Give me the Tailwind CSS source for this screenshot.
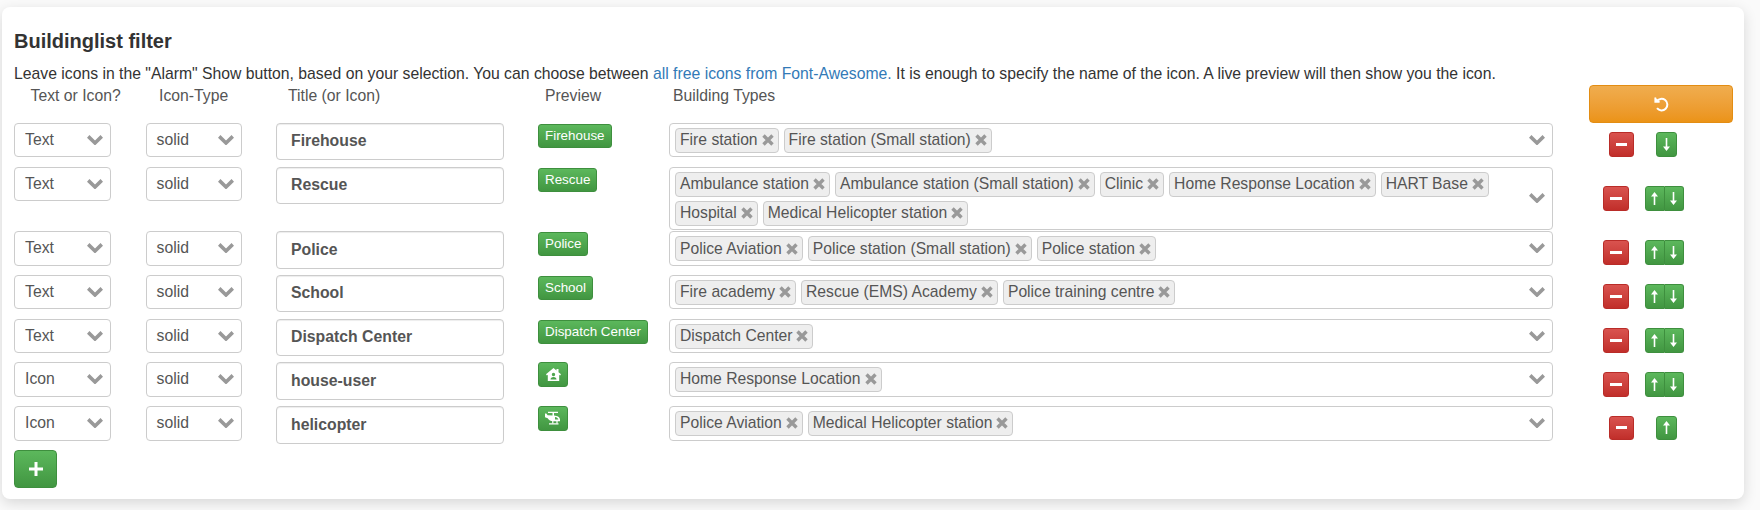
<!doctype html>
<html>
<head>
<meta charset="utf-8">
<script src="https://cdn.jsdelivr.net/npm/@tailwindcss/browser@4"></script>
</head>
<body class="bg-[#fafafa] font-['Liberation_Sans',Arial,sans-serif] text-[15.75px] text-[#333]">
<div class="w-[1760px] h-[510px] overflow-hidden pt-[7px] pl-[2px]">
  <div class="w-[1742px] h-[491.5px] bg-white rounded-[8px] shadow-[0_4px_14px_rgba(0,0,0,0.14)] pl-[12px]">
    <h3 class="pt-[22px] text-[20px] leading-[24px] font-bold text-[#333]">Buildinglist filter</h3>
    <p class="mt-[10.5px] h-[20px] leading-[20px] whitespace-nowrap">Leave icons in the "Alarm" Show button, based on your selection. You can choose between <a class="text-[#337ab7]">all free icons from Font-Awesome.</a> It is enough to specify the name of the icon. A live preview will then show you the icon.</p>

    <!-- header -->
    <div class="grid grid-cols-[131.5px_130.5px_262px_131px_884px_180px] h-[39px] text-[#555]">
      <div class="pl-[16.5px] leading-[23px]">Text or Icon?</div>
      <div class="pl-[13.5px] leading-[23px]">Icon-Type</div>
      <div class="pl-[12px] leading-[23px]">Title (or Icon)</div>
      <div class="pl-[7px] leading-[23px]">Preview</div>
      <div class="pl-[4px] leading-[23px]">Building Types</div>
      <div class="flex justify-end pt-[1.5px]">
        <button class="w-[144px] h-[38px] rounded-[4px] border border-[#e38d13] bg-linear-to-b from-[#f0ad4e] to-[#eb9316] flex items-center justify-center">
          <svg width="16" height="16" viewBox="0 0 16 16" fill="none" stroke="#fff" stroke-width="2"><path d="M2.300 1.500v4.300h4.300" stroke-width="1.800" fill="#fff" stroke-linejoin="miter"/><path d="M3.600 5.600A5.800 5.800 0 1 1 4 12.200"/></svg>
        </button>
      </div>
    </div>

    <!-- row 1 -->
    <div class="grid grid-cols-[131.5px_130.5px_262px_131px_884px_180px] h-[44px]">
      <div class="w-[96.5px] h-[34.5px] border border-[#ccc] rounded-[4px] flex items-center justify-between pl-[10px] pr-[7px] text-[#555]"><span>Text</span><svg width="16" height="10" viewBox="0 0 16 10" fill="none" stroke="#999" stroke-width="3.6"><path d="M1.2 1.4 8 8l6.8-6.6"/></svg></div>
      <div class="w-[96px] h-[34.5px] border border-[#ccc] rounded-[4px] flex items-center justify-between pl-[10px] pr-[7px] text-[#555]"><span>solid</span><svg width="16" height="10" viewBox="0 0 16 10" fill="none" stroke="#999" stroke-width="3.6"><path d="M1.2 1.4 8 8l6.8-6.6"/></svg></div>
      <div class="w-[228px] h-[37.5px] border border-[#ccc] rounded-[4px] shadow-[inset_0_1px_1px_rgba(0,0,0,0.075)] flex items-center pl-[14px] text-[15.8px] font-bold text-[#555]">Firehouse</div>
      <div><span class="inline-flex items-center h-[24px] px-[6px] rounded-[3px] border border-[#3e8f3e] bg-linear-to-b from-[#5cb85c] to-[#419641] text-white text-[13.4px]">Firehouse</span></div>
      <div class="w-[884px] h-[34.5px] border border-[#ccc] rounded-[4px] flex items-start justify-between pr-[7px]">
        <div class="flex flex-wrap gap-x-[5px] gap-y-[4px] pl-[5px] pt-[4px]">
          <span class="inline-flex items-center h-[25px] px-[4px] gap-[4px] bg-[#eee] border border-[#ccc] rounded-[4px] text-[15.7px] text-[#555]">Fire station<svg width="12" height="12" viewBox="0 0 12 12" stroke="#999" stroke-width="3.4"><path d="M1.5 1.5l9 9M10.5 1.5l-9 9"/></svg></span>
          <span class="inline-flex items-center h-[25px] px-[4px] gap-[4px] bg-[#eee] border border-[#ccc] rounded-[4px] text-[15.7px] text-[#555]">Fire station (Small station)<svg width="12" height="12" viewBox="0 0 12 12" stroke="#999" stroke-width="3.4"><path d="M1.5 1.5l9 9M10.5 1.5l-9 9"/></svg></span>
        </div>
        <svg class="mt-[11px] shrink-0" width="16" height="10" viewBox="0 0 16 10" fill="none" stroke="#999" stroke-width="3.6"><path d="M1.2 1.4 8 8l6.8-6.6"/></svg>
      </div>
      <div class="flex justify-center gap-[22px] pt-[9px]">
        <button class="w-[25px] h-[25px] rounded-[3px] border border-[#b92c28] bg-linear-to-b from-[#d9534f] to-[#c12e2a] flex items-center justify-center"><span class="block w-[11px] h-[3px] bg-white"></span></button>
        <button class="w-[21px] h-[25px] rounded-[3px] border border-[#3e8f3e] bg-linear-to-b from-[#5cb85c] to-[#419641] flex items-center justify-center"><svg width="7" height="13" viewBox="0 0 7 13" fill="#fff"><path d="M2.700 0h1.600v8.500H7L3.500 13 0 8.500h2.700z"/></svg></button>
      </div>
    </div>

    <!-- row 2 -->
    <div class="grid grid-cols-[131.5px_130.5px_262px_131px_884px_180px] h-[64.5px]">
      <div class="w-[96.5px] h-[34.5px] border border-[#ccc] rounded-[4px] flex items-center justify-between pl-[10px] pr-[7px] text-[#555]"><span>Text</span><svg width="16" height="10" viewBox="0 0 16 10" fill="none" stroke="#999" stroke-width="3.6"><path d="M1.2 1.4 8 8l6.8-6.6"/></svg></div>
      <div class="w-[96px] h-[34.5px] border border-[#ccc] rounded-[4px] flex items-center justify-between pl-[10px] pr-[7px] text-[#555]"><span>solid</span><svg width="16" height="10" viewBox="0 0 16 10" fill="none" stroke="#999" stroke-width="3.6"><path d="M1.2 1.4 8 8l6.8-6.6"/></svg></div>
      <div class="w-[228px] h-[37.5px] border border-[#ccc] rounded-[4px] shadow-[inset_0_1px_1px_rgba(0,0,0,0.075)] flex items-center pl-[14px] text-[15.8px] font-bold text-[#555]">Rescue</div>
      <div><span class="inline-flex items-center h-[24px] px-[6px] rounded-[3px] border border-[#3e8f3e] bg-linear-to-b from-[#5cb85c] to-[#419641] text-white text-[13.4px]">Rescue</span></div>
      <div class="w-[884px] h-[63.5px] border border-[#ccc] rounded-[4px] flex items-center justify-between pr-[7px]">
        <div class="flex flex-wrap gap-x-[5px] gap-y-[4px] pl-[5px] self-start pt-[4px] w-[840px]">
          <span class="inline-flex items-center h-[25px] px-[4px] gap-[4px] bg-[#eee] border border-[#ccc] rounded-[4px] text-[15.7px] text-[#555]">Ambulance station<svg width="12" height="12" viewBox="0 0 12 12" stroke="#999" stroke-width="3.4"><path d="M1.5 1.5l9 9M10.5 1.5l-9 9"/></svg></span>
          <span class="inline-flex items-center h-[25px] px-[4px] gap-[4px] bg-[#eee] border border-[#ccc] rounded-[4px] text-[15.7px] text-[#555]">Ambulance station (Small station)<svg width="12" height="12" viewBox="0 0 12 12" stroke="#999" stroke-width="3.4"><path d="M1.5 1.5l9 9M10.5 1.5l-9 9"/></svg></span>
          <span class="inline-flex items-center h-[25px] px-[4px] gap-[4px] bg-[#eee] border border-[#ccc] rounded-[4px] text-[15.7px] text-[#555]">Clinic<svg width="12" height="12" viewBox="0 0 12 12" stroke="#999" stroke-width="3.4"><path d="M1.5 1.5l9 9M10.5 1.5l-9 9"/></svg></span>
          <span class="inline-flex items-center h-[25px] px-[4px] gap-[4px] bg-[#eee] border border-[#ccc] rounded-[4px] text-[15.7px] text-[#555]">Home Response Location<svg width="12" height="12" viewBox="0 0 12 12" stroke="#999" stroke-width="3.4"><path d="M1.5 1.5l9 9M10.5 1.5l-9 9"/></svg></span>
          <span class="inline-flex items-center h-[25px] px-[4px] gap-[4px] bg-[#eee] border border-[#ccc] rounded-[4px] text-[15.7px] text-[#555]">HART Base<svg width="12" height="12" viewBox="0 0 12 12" stroke="#999" stroke-width="3.4"><path d="M1.5 1.5l9 9M10.5 1.5l-9 9"/></svg></span>
          <span class="inline-flex items-center h-[25px] px-[4px] gap-[4px] bg-[#eee] border border-[#ccc] rounded-[4px] text-[15.7px] text-[#555]">Hospital<svg width="12" height="12" viewBox="0 0 12 12" stroke="#999" stroke-width="3.4"><path d="M1.5 1.5l9 9M10.5 1.5l-9 9"/></svg></span>
          <span class="inline-flex items-center h-[25px] px-[4px] gap-[4px] bg-[#eee] border border-[#ccc] rounded-[4px] text-[15.7px] text-[#555]">Medical Helicopter station<svg width="12" height="12" viewBox="0 0 12 12" stroke="#999" stroke-width="3.4"><path d="M1.5 1.5l9 9M10.5 1.5l-9 9"/></svg></span>
        </div>
        <svg class="shrink-0" width="16" height="10" viewBox="0 0 16 10" fill="none" stroke="#999" stroke-width="3.6"><path d="M1.2 1.4 8 8l6.8-6.6"/></svg>
      </div>
      <div class="flex justify-center gap-[16px] pt-[19px]">
        <button class="w-[26px] h-[25px] rounded-[3px] border border-[#b92c28] bg-linear-to-b from-[#d9534f] to-[#c12e2a] flex items-center justify-center"><span class="block w-[12px] h-[3px] bg-white"></span></button>
        <div class="flex h-[25px]">
          <button class="w-[20px] h-[25px] rounded-l-[3px] border border-[#3e8f3e] bg-linear-to-b from-[#5cb85c] to-[#419641] flex items-center justify-center"><svg width="7" height="13" viewBox="0 0 7 13" fill="#fff"><path d="M2.700 13h1.600V4.500H7L3.500 0 0 4.500h2.700z"/></svg></button>
          <button class="w-[19px] h-[25px] rounded-r-[3px] border border-l-0 border-[#3e8f3e] bg-linear-to-b from-[#5cb85c] to-[#419641] flex items-center justify-center"><svg width="7" height="13" viewBox="0 0 7 13" fill="#fff"><path d="M2.700 0h1.600v8.500H7L3.500 13 0 8.500h2.700z"/></svg></button>
        </div>
      </div>
    </div>

    <!-- row 3 -->
    <div class="grid grid-cols-[131.5px_130.5px_262px_131px_884px_180px] h-[43.5px]">
      <div class="w-[96.5px] h-[34.5px] border border-[#ccc] rounded-[4px] flex items-center justify-between pl-[10px] pr-[7px] text-[#555]"><span>Text</span><svg width="16" height="10" viewBox="0 0 16 10" fill="none" stroke="#999" stroke-width="3.6"><path d="M1.2 1.4 8 8l6.8-6.6"/></svg></div>
      <div class="w-[96px] h-[34.5px] border border-[#ccc] rounded-[4px] flex items-center justify-between pl-[10px] pr-[7px] text-[#555]"><span>solid</span><svg width="16" height="10" viewBox="0 0 16 10" fill="none" stroke="#999" stroke-width="3.6"><path d="M1.2 1.4 8 8l6.8-6.6"/></svg></div>
      <div class="w-[228px] h-[37.5px] border border-[#ccc] rounded-[4px] shadow-[inset_0_1px_1px_rgba(0,0,0,0.075)] flex items-center pl-[14px] text-[15.8px] font-bold text-[#555]">Police</div>
      <div><span class="inline-flex items-center h-[24px] px-[6px] rounded-[3px] border border-[#3e8f3e] bg-linear-to-b from-[#5cb85c] to-[#419641] text-white text-[13.4px]">Police</span></div>
      <div class="w-[884px] h-[34.5px] border border-[#ccc] rounded-[4px] flex items-start justify-between pr-[7px]">
        <div class="flex flex-wrap gap-x-[5px] gap-y-[4px] pl-[5px] pt-[4px]">
          <span class="inline-flex items-center h-[25px] px-[4px] gap-[4px] bg-[#eee] border border-[#ccc] rounded-[4px] text-[15.7px] text-[#555]">Police Aviation<svg width="12" height="12" viewBox="0 0 12 12" stroke="#999" stroke-width="3.4"><path d="M1.5 1.5l9 9M10.5 1.5l-9 9"/></svg></span>
          <span class="inline-flex items-center h-[25px] px-[4px] gap-[4px] bg-[#eee] border border-[#ccc] rounded-[4px] text-[15.7px] text-[#555]">Police station (Small station)<svg width="12" height="12" viewBox="0 0 12 12" stroke="#999" stroke-width="3.4"><path d="M1.5 1.5l9 9M10.5 1.5l-9 9"/></svg></span>
          <span class="inline-flex items-center h-[25px] px-[4px] gap-[4px] bg-[#eee] border border-[#ccc] rounded-[4px] text-[15.7px] text-[#555]">Police station<svg width="12" height="12" viewBox="0 0 12 12" stroke="#999" stroke-width="3.4"><path d="M1.5 1.5l9 9M10.5 1.5l-9 9"/></svg></span>
        </div>
        <svg class="mt-[11px] shrink-0" width="16" height="10" viewBox="0 0 16 10" fill="none" stroke="#999" stroke-width="3.6"><path d="M1.2 1.4 8 8l6.8-6.6"/></svg>
      </div>
      <div class="flex justify-center gap-[16px] pt-[9px]">
        <button class="w-[26px] h-[25px] rounded-[3px] border border-[#b92c28] bg-linear-to-b from-[#d9534f] to-[#c12e2a] flex items-center justify-center"><span class="block w-[12px] h-[3px] bg-white"></span></button>
        <div class="flex h-[25px]">
          <button class="w-[20px] h-[25px] rounded-l-[3px] border border-[#3e8f3e] bg-linear-to-b from-[#5cb85c] to-[#419641] flex items-center justify-center"><svg width="7" height="13" viewBox="0 0 7 13" fill="#fff"><path d="M2.700 13h1.600V4.500H7L3.500 0 0 4.500h2.700z"/></svg></button>
          <button class="w-[19px] h-[25px] rounded-r-[3px] border border-l-0 border-[#3e8f3e] bg-linear-to-b from-[#5cb85c] to-[#419641] flex items-center justify-center"><svg width="7" height="13" viewBox="0 0 7 13" fill="#fff"><path d="M2.700 0h1.600v8.500H7L3.500 13 0 8.500h2.700z"/></svg></button>
        </div>
      </div>
    </div>

    <!-- row 4 -->
    <div class="grid grid-cols-[131.5px_130.5px_262px_131px_884px_180px] h-[44px]">
      <div class="w-[96.5px] h-[34.5px] border border-[#ccc] rounded-[4px] flex items-center justify-between pl-[10px] pr-[7px] text-[#555]"><span>Text</span><svg width="16" height="10" viewBox="0 0 16 10" fill="none" stroke="#999" stroke-width="3.6"><path d="M1.2 1.4 8 8l6.8-6.6"/></svg></div>
      <div class="w-[96px] h-[34.5px] border border-[#ccc] rounded-[4px] flex items-center justify-between pl-[10px] pr-[7px] text-[#555]"><span>solid</span><svg width="16" height="10" viewBox="0 0 16 10" fill="none" stroke="#999" stroke-width="3.6"><path d="M1.2 1.4 8 8l6.8-6.6"/></svg></div>
      <div class="w-[228px] h-[37.5px] border border-[#ccc] rounded-[4px] shadow-[inset_0_1px_1px_rgba(0,0,0,0.075)] flex items-center pl-[14px] text-[15.8px] font-bold text-[#555]">School</div>
      <div><span class="inline-flex items-center h-[24px] px-[6px] rounded-[3px] border border-[#3e8f3e] bg-linear-to-b from-[#5cb85c] to-[#419641] text-white text-[13.4px]">School</span></div>
      <div class="w-[884px] h-[34.5px] border border-[#ccc] rounded-[4px] flex items-start justify-between pr-[7px]">
        <div class="flex flex-wrap gap-x-[5px] gap-y-[4px] pl-[5px] pt-[4px]">
          <span class="inline-flex items-center h-[25px] px-[4px] gap-[4px] bg-[#eee] border border-[#ccc] rounded-[4px] text-[15.7px] text-[#555]">Fire academy<svg width="12" height="12" viewBox="0 0 12 12" stroke="#999" stroke-width="3.4"><path d="M1.5 1.5l9 9M10.5 1.5l-9 9"/></svg></span>
          <span class="inline-flex items-center h-[25px] px-[4px] gap-[4px] bg-[#eee] border border-[#ccc] rounded-[4px] text-[15.7px] text-[#555]">Rescue (EMS) Academy<svg width="12" height="12" viewBox="0 0 12 12" stroke="#999" stroke-width="3.4"><path d="M1.5 1.5l9 9M10.5 1.5l-9 9"/></svg></span>
          <span class="inline-flex items-center h-[25px] px-[4px] gap-[4px] bg-[#eee] border border-[#ccc] rounded-[4px] text-[15.7px] text-[#555]">Police training centre<svg width="12" height="12" viewBox="0 0 12 12" stroke="#999" stroke-width="3.4"><path d="M1.5 1.5l9 9M10.5 1.5l-9 9"/></svg></span>
        </div>
        <svg class="mt-[11px] shrink-0" width="16" height="10" viewBox="0 0 16 10" fill="none" stroke="#999" stroke-width="3.6"><path d="M1.2 1.4 8 8l6.8-6.6"/></svg>
      </div>
      <div class="flex justify-center gap-[16px] pt-[9px]">
        <button class="w-[26px] h-[25px] rounded-[3px] border border-[#b92c28] bg-linear-to-b from-[#d9534f] to-[#c12e2a] flex items-center justify-center"><span class="block w-[12px] h-[3px] bg-white"></span></button>
        <div class="flex h-[25px]">
          <button class="w-[20px] h-[25px] rounded-l-[3px] border border-[#3e8f3e] bg-linear-to-b from-[#5cb85c] to-[#419641] flex items-center justify-center"><svg width="7" height="13" viewBox="0 0 7 13" fill="#fff"><path d="M2.700 13h1.600V4.500H7L3.500 0 0 4.500h2.700z"/></svg></button>
          <button class="w-[19px] h-[25px] rounded-r-[3px] border border-l-0 border-[#3e8f3e] bg-linear-to-b from-[#5cb85c] to-[#419641] flex items-center justify-center"><svg width="7" height="13" viewBox="0 0 7 13" fill="#fff"><path d="M2.700 0h1.600v8.500H7L3.500 13 0 8.500h2.700z"/></svg></button>
        </div>
      </div>
    </div>

    <!-- row 5 -->
    <div class="grid grid-cols-[131.5px_130.5px_262px_131px_884px_180px] h-[43px]">
      <div class="w-[96.5px] h-[34.5px] border border-[#ccc] rounded-[4px] flex items-center justify-between pl-[10px] pr-[7px] text-[#555]"><span>Text</span><svg width="16" height="10" viewBox="0 0 16 10" fill="none" stroke="#999" stroke-width="3.6"><path d="M1.2 1.4 8 8l6.8-6.6"/></svg></div>
      <div class="w-[96px] h-[34.5px] border border-[#ccc] rounded-[4px] flex items-center justify-between pl-[10px] pr-[7px] text-[#555]"><span>solid</span><svg width="16" height="10" viewBox="0 0 16 10" fill="none" stroke="#999" stroke-width="3.6"><path d="M1.2 1.4 8 8l6.8-6.6"/></svg></div>
      <div class="w-[228px] h-[37.5px] border border-[#ccc] rounded-[4px] shadow-[inset_0_1px_1px_rgba(0,0,0,0.075)] flex items-center pl-[14px] text-[15.8px] font-bold text-[#555]">Dispatch Center</div>
      <div><span class="inline-flex items-center h-[24px] px-[6px] rounded-[3px] border border-[#3e8f3e] bg-linear-to-b from-[#5cb85c] to-[#419641] text-white text-[13.4px] whitespace-nowrap">Dispatch Center</span></div>
      <div class="w-[884px] h-[34.5px] border border-[#ccc] rounded-[4px] flex items-start justify-between pr-[7px]">
        <div class="flex flex-wrap gap-x-[5px] gap-y-[4px] pl-[5px] pt-[4px]">
          <span class="inline-flex items-center h-[25px] px-[4px] gap-[4px] bg-[#eee] border border-[#ccc] rounded-[4px] text-[15.7px] text-[#555]">Dispatch Center<svg width="12" height="12" viewBox="0 0 12 12" stroke="#999" stroke-width="3.4"><path d="M1.5 1.5l9 9M10.5 1.5l-9 9"/></svg></span>
        </div>
        <svg class="mt-[11px] shrink-0" width="16" height="10" viewBox="0 0 16 10" fill="none" stroke="#999" stroke-width="3.6"><path d="M1.2 1.4 8 8l6.8-6.6"/></svg>
      </div>
      <div class="flex justify-center gap-[16px] pt-[9px]">
        <button class="w-[26px] h-[25px] rounded-[3px] border border-[#b92c28] bg-linear-to-b from-[#d9534f] to-[#c12e2a] flex items-center justify-center"><span class="block w-[12px] h-[3px] bg-white"></span></button>
        <div class="flex h-[25px]">
          <button class="w-[20px] h-[25px] rounded-l-[3px] border border-[#3e8f3e] bg-linear-to-b from-[#5cb85c] to-[#419641] flex items-center justify-center"><svg width="7" height="13" viewBox="0 0 7 13" fill="#fff"><path d="M2.700 13h1.600V4.500H7L3.500 0 0 4.500h2.700z"/></svg></button>
          <button class="w-[19px] h-[25px] rounded-r-[3px] border border-l-0 border-[#3e8f3e] bg-linear-to-b from-[#5cb85c] to-[#419641] flex items-center justify-center"><svg width="7" height="13" viewBox="0 0 7 13" fill="#fff"><path d="M2.700 0h1.600v8.500H7L3.500 13 0 8.500h2.700z"/></svg></button>
        </div>
      </div>
    </div>

    <!-- row 6 -->
    <div class="grid grid-cols-[131.5px_130.5px_262px_131px_884px_180px] h-[44px]">
      <div class="w-[96.5px] h-[35.5px] border border-[#ccc] rounded-[4px] flex items-center justify-between pl-[10px] pr-[7px] text-[#555]"><span>Icon</span><svg width="16" height="10" viewBox="0 0 16 10" fill="none" stroke="#999" stroke-width="3.6"><path d="M1.2 1.4 8 8l6.8-6.6"/></svg></div>
      <div class="w-[96px] h-[35.5px] border border-[#ccc] rounded-[4px] flex items-center justify-between pl-[10px] pr-[7px] text-[#555]"><span>solid</span><svg width="16" height="10" viewBox="0 0 16 10" fill="none" stroke="#999" stroke-width="3.6"><path d="M1.2 1.4 8 8l6.8-6.6"/></svg></div>
      <div class="w-[228px] h-[38.5px] border border-[#ccc] rounded-[4px] shadow-[inset_0_1px_1px_rgba(0,0,0,0.075)] flex items-center pl-[14px] text-[15.8px] font-bold text-[#555]">house-user</div>
      <div><span class="inline-flex items-center justify-center w-[30px] h-[25px] rounded-[3px] border border-[#3e8f3e] bg-linear-to-b from-[#5cb85c] to-[#419641]"><svg width="15" height="13" viewBox="0 0 15 13"><path fill="#fff" fill-rule="evenodd" d="M7.500 0 10.500 2.500V1h2v3.200L15 6.300l-.9 1.100-.9-.7V13H1.800V6.700l-.9.700L0 6.300zM7.500 4.800a1.700 1.700 0 1 0 0 3.400 1.700 1.700 0 0 0 0-3.400zM4.500 11.600h6c0-1.500-1.200-2.600-3-2.600s-3 1.100-3 2.600z"/></svg></span></div>
      <div class="w-[884px] h-[35.5px] border border-[#ccc] rounded-[4px] flex items-center justify-between pr-[7px]">
        <div class="flex flex-wrap gap-x-[5px] gap-y-[4px] pl-[5px]">
          <span class="inline-flex items-center h-[25px] px-[4px] gap-[4px] bg-[#eee] border border-[#ccc] rounded-[4px] text-[15.7px] text-[#555]">Home Response Location<svg width="12" height="12" viewBox="0 0 12 12" stroke="#999" stroke-width="3.4"><path d="M1.5 1.5l9 9M10.5 1.5l-9 9"/></svg></span>
        </div>
        <svg class="shrink-0" width="16" height="10" viewBox="0 0 16 10" fill="none" stroke="#999" stroke-width="3.6"><path d="M1.2 1.4 8 8l6.8-6.6"/></svg>
      </div>
      <div class="flex justify-center gap-[16px] pt-[10px]">
        <button class="w-[26px] h-[25px] rounded-[3px] border border-[#b92c28] bg-linear-to-b from-[#d9534f] to-[#c12e2a] flex items-center justify-center"><span class="block w-[12px] h-[3px] bg-white"></span></button>
        <div class="flex h-[25px]">
          <button class="w-[20px] h-[25px] rounded-l-[3px] border border-[#3e8f3e] bg-linear-to-b from-[#5cb85c] to-[#419641] flex items-center justify-center"><svg width="7" height="13" viewBox="0 0 7 13" fill="#fff"><path d="M2.700 13h1.600V4.500H7L3.500 0 0 4.500h2.700z"/></svg></button>
          <button class="w-[19px] h-[25px] rounded-r-[3px] border border-l-0 border-[#3e8f3e] bg-linear-to-b from-[#5cb85c] to-[#419641] flex items-center justify-center"><svg width="7" height="13" viewBox="0 0 7 13" fill="#fff"><path d="M2.700 0h1.600v8.500H7L3.500 13 0 8.500h2.700z"/></svg></button>
        </div>
      </div>
    </div>

    <!-- row 7 -->
    <div class="grid grid-cols-[131.5px_130.5px_262px_131px_884px_180px] h-[44px]">
      <div class="w-[96.5px] h-[35.5px] border border-[#ccc] rounded-[4px] flex items-center justify-between pl-[10px] pr-[7px] text-[#555]"><span>Icon</span><svg width="16" height="10" viewBox="0 0 16 10" fill="none" stroke="#999" stroke-width="3.6"><path d="M1.2 1.4 8 8l6.8-6.6"/></svg></div>
      <div class="w-[96px] h-[35.5px] border border-[#ccc] rounded-[4px] flex items-center justify-between pl-[10px] pr-[7px] text-[#555]"><span>solid</span><svg width="16" height="10" viewBox="0 0 16 10" fill="none" stroke="#999" stroke-width="3.6"><path d="M1.2 1.4 8 8l6.8-6.6"/></svg></div>
      <div class="w-[228px] h-[38.5px] border border-[#ccc] rounded-[4px] shadow-[inset_0_1px_1px_rgba(0,0,0,0.075)] flex items-center pl-[14px] text-[15.8px] font-bold text-[#555]">helicopter</div>
      <div><span class="inline-flex items-center justify-center w-[30px] h-[25px] rounded-[3px] border border-[#3e8f3e] bg-linear-to-b from-[#5cb85c] to-[#419641]"><svg width="17" height="14" viewBox="0 0 17 14"><path fill="#fff" fill-rule="evenodd" d="M0 2.500h1.300L2.600 4.200 7.500 4.500V2H3V.8h10V2H9v2.600c3.600.4 6 1.700 6 4.100V10.200H8.200C5.800 10.200 3.700 9.300 2.700 7.200L0 6.300zM10 5.900V8.500h3.400C13.200 7.200 11.900 6.200 10 5.900zM4 12.200h9.500V13.500H4z"/><path fill="#fff" d="M7.200 10h1.200v2.500H7.200zM11.400 10h1.200v2.500h-1.200z"/></svg></span></div>
      <div class="w-[884px] h-[35.5px] border border-[#ccc] rounded-[4px] flex items-center justify-between pr-[7px]">
        <div class="flex flex-wrap gap-x-[5px] gap-y-[4px] pl-[5px]">
          <span class="inline-flex items-center h-[25px] px-[4px] gap-[4px] bg-[#eee] border border-[#ccc] rounded-[4px] text-[15.7px] text-[#555]">Police Aviation<svg width="12" height="12" viewBox="0 0 12 12" stroke="#999" stroke-width="3.4"><path d="M1.5 1.5l9 9M10.5 1.5l-9 9"/></svg></span>
          <span class="inline-flex items-center h-[25px] px-[4px] gap-[4px] bg-[#eee] border border-[#ccc] rounded-[4px] text-[15.7px] text-[#555]">Medical Helicopter station<svg width="12" height="12" viewBox="0 0 12 12" stroke="#999" stroke-width="3.4"><path d="M1.5 1.5l9 9M10.5 1.5l-9 9"/></svg></span>
        </div>
        <svg class="shrink-0" width="16" height="10" viewBox="0 0 16 10" fill="none" stroke="#999" stroke-width="3.6"><path d="M1.2 1.4 8 8l6.8-6.6"/></svg>
      </div>
      <div class="flex justify-center gap-[22px] pt-[10px]">
        <button class="w-[25px] h-[24px] rounded-[3px] border border-[#b92c28] bg-linear-to-b from-[#d9534f] to-[#c12e2a] flex items-center justify-center"><span class="block w-[11px] h-[3px] bg-white"></span></button>
        <button class="w-[21px] h-[24px] rounded-[3px] border border-[#3e8f3e] bg-linear-to-b from-[#5cb85c] to-[#419641] flex items-center justify-center"><svg width="7" height="13" viewBox="0 0 7 13" fill="#fff"><path d="M2.700 13h1.600V4.500H7L3.500 0 0 4.500h2.700z"/></svg></button>
      </div>
    </div>

    <button class="w-[43px] h-[38px] rounded-[4px] border border-[#3e8f3e] bg-linear-to-b from-[#5cb85c] to-[#419641] flex items-center justify-center"><svg width="14" height="14" viewBox="0 0 14 14" fill="#fff"><path d="M5.500 0h3v5.500H14v3H8.500V14h-3V8.500H0v-3h5.500z"/></svg></button>
  </div>
</div>
</body>
</html>
